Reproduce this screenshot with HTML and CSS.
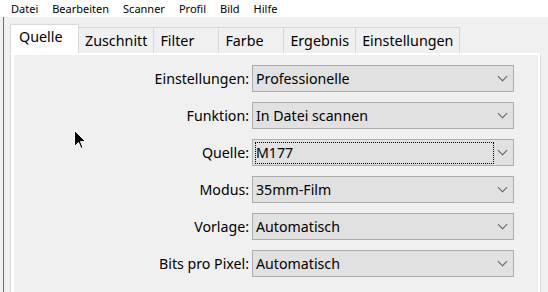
FILE: index.html
```html
<!DOCTYPE html>
<html>
<head>
    <title>Scanner</title>
    <link rel="stylesheet" href="styles.css">
</head>
<body>
    <div class="menubar">
        <span class="menu-item">Datei</span>
        <span class="menu-item">Bearbeiten</span>
        <span class="menu-item">Scanner</span>
        <span class="menu-item">Profil</span>
        <span class="menu-item">Bild</span>
        <span class="menu-item">Hilfe</span>
    </div>

    <div class="main">
        <div class="tabs">
            <div class="tab active">Quelle</div>
            <div class="tab">Zuschnitt</div>
            <div class="tab">Filter</div>
            <div class="tab">Farbe</div>
            <div class="tab">Ergebnis</div>
            <div class="tab">Einstellungen</div>
        </div>

        <div class="panel">
            <div class="page">
                <div class="form">
                    <label class="label">Einstellungen:</label>
                    <div class="combo"><span class="combo-text">Professionelle</span><span class="chevron"></span></div>

                    <label class="label">Funktion:</label>
                    <div class="combo"><span class="combo-text">In Datei scannen</span><span class="chevron"></span></div>

                    <label class="label">Quelle:</label>
                    <div class="combo focused"><span class="combo-text">M177</span><span class="chevron"></span></div>

                    <label class="label">Modus:</label>
                    <div class="combo"><span class="combo-text">35mm-Film</span><span class="chevron"></span></div>

                    <label class="label">Vorlage:</label>
                    <div class="combo"><span class="combo-text">Automatisch</span><span class="chevron"></span></div>

                    <label class="label">Bits pro Pixel:</label>
                    <div class="combo"><span class="combo-text">Automatisch</span><span class="chevron"></span></div>
                </div>
            </div>
        </div>
    </div>

    <svg class="cursor" width="13" height="20" viewBox="0 0 13 20">
        <path d="M0.5 0.5 L0.5 16.5 L4.5 12.5 L7 18.5 L9 17.5 L6.5 11.5 L11.5 11.5 Z" fill="#000" stroke="#fff" stroke-width="1"/>
    </svg>
</body>
</html>
```

FILE: styles.css
```css
body { margin: 0; background: #f0f0f0; font-family: "Noto Sans", "Open Sans", sans-serif; color: #000; overflow: hidden; position: relative; height: 292px; }

.menubar { height: 17px; background: #fff; display: flex; padding-left: 4px; font-size: 11px; line-height: 17px; }
.menu-item { padding: 0 7px; }

.main { margin-left: 3px; border-left: 1px solid #6d6d6d; padding-left: 6px; height: 275px; padding-top: 8px; box-sizing: border-box; }

.tabs { display: flex; align-items: flex-end; height: 28px; font-size: 14.3px; }
.tab { height: 26px; box-sizing: border-box; min-width: 66px; padding: 0 6px; border: 1px solid #d9d9d9; border-bottom: none; margin-left: -1px; background: #f0f0f0; line-height: 25px; }
.tab.active { height: 29px; margin-left: 0; margin-right: -1px; padding: 0 8px; background: #fff; position: relative; z-index: 1; line-height: 23px; min-width: 69px; }
.tab.active + .tab { margin-left: 0; }

.panel { width: 531px; height: 240px; background: #fff; border: 1px solid #d9d9d9; border-top-color: #fff; box-sizing: border-box; padding: 1px 2px 0 3px; }
.page { background: #f0f0f0; height: 100%; padding-top: 10px; box-sizing: border-box; }

.form { display: grid; grid-template-columns: 1fr 262px; column-gap: 3px; row-gap: 10px; padding-right: 24px; font-size: 14.2px; }
.label { text-align: right; line-height: 27px; }
.combo { height: 27px; box-sizing: border-box; border: 1px solid #adadad; background: #e1e1e1; display: flex; align-items: center; padding-left: 3px; position: relative; }
.combo-text { flex: 1; line-height: 25px; }
.chevron { width: 6px; height: 6px; border-right: 1px solid #606060; border-bottom: 1px solid #606060; transform: rotate(45deg); margin-right: 7px; margin-top: -4px; }
.combo.focused::after { content: ""; position: absolute; left: 2px; top: 2px; right: 19px; bottom: 1px; border: 1px dotted #000; }

.cursor { position: absolute; left: 74px; top: 130px; }
```
